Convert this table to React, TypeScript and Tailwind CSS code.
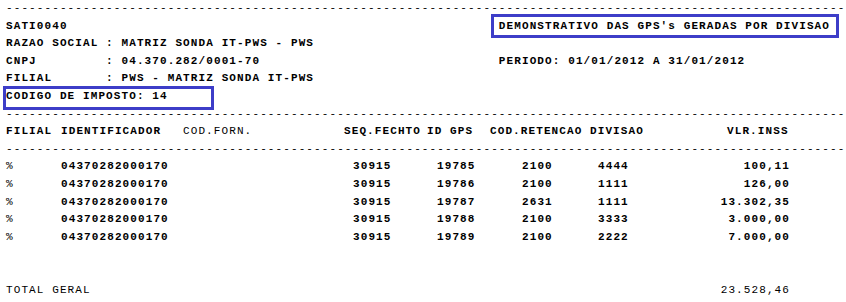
const dashes = '-'.repeat(109);

const rows = [
  { filial: '%', id: '04370282000170', seq: '30915', gps: '19785', ret: '2100', div: '4444', vlr: '100,11' },
  { filial: '%', id: '04370282000170', seq: '30915', gps: '19786', ret: '2100', div: '1111', vlr: '126,00' },
  { filial: '%', id: '04370282000170', seq: '30915', gps: '19787', ret: '2631', div: '1111', vlr: '13.302,35' },
  { filial: '%', id: '04370282000170', seq: '30915', gps: '19788', ret: '2100', div: '3333', vlr: '3.000,00' },
  { filial: '%', id: '04370282000170', seq: '30915', gps: '19789', ret: '2100', div: '2222', vlr: '7.000,00' },
];

function Line({ children, bold = true }: { children?: React.ReactNode; bold?: boolean }) {
  return (
    <div className={`h-[17.6px] whitespace-pre pl-[6px] ${bold ? 'font-bold' : 'font-normal'}`}>
      {children}
    </div>
  );
}

function Dash() {
  return <Line bold={false}>{dashes}</Line>;
}

export default function App() {
  return (
    <div
      className="relative w-[846px] h-[302px] overflow-hidden bg-white text-black text-[11px] leading-[17.6px] tracking-[1.1px]"
      style={{ fontFamily: '"Liberation Mono", "Courier New", monospace' }}
    >
      <Dash />
      <Line>{'SATI0040'.padEnd(64) + "DEMONSTRATIVO DAS GPS's GERADAS POR DIVISAO"}</Line>
      <Line>{'RAZAO SOCIAL : MATRIZ SONDA IT-PWS - PWS'}</Line>
      <Line>{'CNPJ         : 04.370.282/0001-70'.padEnd(64) + 'PERIODO: 01/01/2012 A 31/01/2012'}</Line>
      <Line>{'FILIAL       : PWS - MATRIZ SONDA IT-PWS'}</Line>
      <Line>{'CODIGO DE IMPOSTO: 14'}</Line>
      <Dash />

      <div className="flex h-[17.6px] whitespace-pre pl-[6px] font-bold">
        <span className="w-[55px] shrink-0">FILIAL</span>
        <span className="w-[122px] shrink-0">IDENTIFICADOR</span>
        <span className="w-[161px] shrink-0 font-normal">COD.FORN.</span>
        <span className="w-[83px] shrink-0">SEQ.FECHTO</span>
        <span className="w-[63px] shrink-0">ID GPS</span>
        <span className="w-[100px] shrink-0">COD.RETENCAO</span>
        <span className="w-[137px] shrink-0">DIVISAO</span>
        <span className="shrink-0">VLR.INSS</span>
      </div>
      <Dash />

      {rows.map((r) => (
        <div key={r.gps} className="flex h-[17.6px] whitespace-pre pl-[6px] font-bold">
          <span className="w-[55px] shrink-0 font-normal">{r.filial}</span>
          <span className="w-[292px] shrink-0">{r.id}</span>
          <span className="w-[84px] shrink-0">{r.seq}</span>
          <span className="w-[85px] shrink-0">{r.gps}</span>
          <span className="w-[76px] shrink-0">{r.ret}</span>
          <span className="w-[100px] shrink-0">{r.div}</span>
          <span className="w-[92px] shrink-0 text-right">{r.vlr}</span>
        </div>
      ))}

      <Line />
      <Line />
      <div className="flex w-[790px] h-[17.6px] justify-between whitespace-pre pl-[6px]">
        <span>TOTAL GERAL</span>
        <span>23.528,46</span>
      </div>

      <div className="absolute left-[491px] top-[14px] w-[348px] h-[24px] border-[3px] border-[#3d3dc8]" />
      <div className="absolute left-[3px] top-[86px] w-[211px] h-[24px] border-[3px] border-[#3d3dc8]" />
    </div>
  );
}
